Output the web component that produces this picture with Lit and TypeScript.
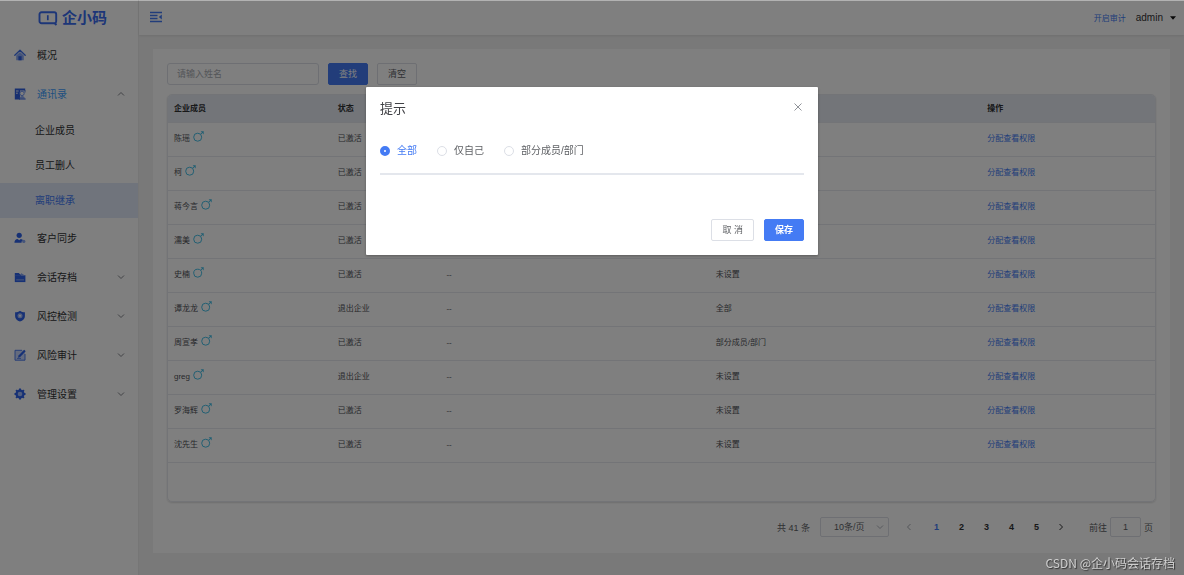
import { LitElement, html, css, svg, nothing } from "lit";
import { customElement, state } from "lit/decorators.js";
import { classMap } from "lit/directives/class-map.js";

const menuIcons: Record<string, unknown> = {
  home: svg`<path d="M.8 6.3 6 1.2l5.2 5.1" fill="none" stroke="#3d6fec" stroke-width="1.3" stroke-linecap="round" stroke-linejoin="round"/><path d="M2.2 6.6 6 3l3.8 3.6v4.7H2.2z" fill="#8aa9f5"/><path d="M4.4 7.2h3.2v4.1H4.4z" fill="#2f5fe0"/>`,
  contacts: svg`<path d="M.8.6h10.400v2H6v8.900H.8z" fill="#2f5fe0"/><path d="M2 3h2.600M2 5.200h1.800" stroke="#fff" stroke-width=".9"/><circle cx="8" cy="5.400" r="2.200" fill="none" stroke="#6f95f2" stroke-width="1"/><path d="M5.600 10.600c0-3.600 5.200-3.600 5.200 0z" fill="#8aa9f5"/><path d="M5 11h6.600" stroke="#2f5fe0" stroke-width="1"/><path d="M11 2v2.500" stroke="#2f5fe0" stroke-width=".8"/>`,
  customer: svg`<circle cx="5.2" cy="3.3" r="2.6" fill="#2f63ea"/><path d="M.4 10.8c0-2.6 1.4-3.8 3.2-3.9l1.6 1.3 1.6-1.3c1 .1 1.8.6 2.2 1.3L7.6 9.4v1.4z" fill="#2f63ea"/><circle cx="9.8" cy="9.4" r="1.6" fill="#8aa9f5"/>`,
  folder: svg`<path d="M.8 1.9h4l1.5 1.5H9v1.2H.8z" fill="#2f63ea"/><path d="M.8 4.2h10.6v6.9H.8z" fill="#2f63ea"/><path d="m7 1.9 4.4 2.9H7z" fill="#8aa9f5"/><path d="M2.2 8.900h7.800" stroke="#9db7f8" stroke-width=".9"/>`,
  shield: svg`<path d="M6 .8c1.4 1 3 1.5 4.9 1.5v3.9c0 2.6-2 4.3-4.9 5.3C3.100 10.500 1.100 8.800 1.100 6.200V2.300C3 2.300 4.600 1.800 6 .8z" fill="#2f63ea"/><circle cx="6" cy="5.700" r="2.500" fill="#a4bcfa"/><circle cx="6" cy="5.700" r="1" fill="#fff"/>`,
  audit: svg`<path d="M1 1.300h10v9.900H1z" fill="#a4bcfa" opacity=".6"/><path d="M8 1.300H1v9.900h10V5" fill="none" stroke="#3d6fec" stroke-width=".9"/><path d="m4 8.800.5-2.300L10.200.8l1.500 1.500L6.200 8z" fill="#2f63ea"/><path d="M3 9.400h4" stroke="#2f63ea" stroke-width=".7"/>`,
  gear: svg`<circle cx="6" cy="6" r="3.300" fill="none" stroke="#2f63ea" stroke-width="2.600"/><path d="M6 .5v11M.5 6h11M2.100 2.100l7.800 7.800M9.900 2.100 2.100 9.900" stroke="#2f63ea" stroke-width="2"/><circle cx="6" cy="6" r="2.300" fill="#a4bcfa"/>`,
};

const menu = [
  { icon: "home", label: "概况" },
  { icon: "contacts", label: "通讯录", open: true, children: ["企业成员", "员工删人", "离职继承"] },
  { icon: "customer", label: "客户同步" },
  { icon: "folder", label: "会话存档", arrow: true },
  { icon: "shield", label: "风控检测", arrow: true },
  { icon: "audit", label: "风险审计", arrow: true },
  { icon: "gear", label: "管理设置", arrow: true },
];

const members = [
  ["陈瑶", "已激活", "未设置"],
  ["柯", "已激活", "未设置"],
  ["蒋今言", "已激活", "未设置"],
  ["濡美", "已激活", "未设置"],
  ["史楠", "已激活", "未设置"],
  ["谭龙龙", "退出企业", "全部"],
  ["周宣孝", "已激活", "部分成员/部门"],
  ["greg", "退出企业", "未设置"],
  ["罗海辉", "已激活", "未设置"],
  ["沈先生", "已激活", "未设置"],
];

const chevron = (d: string, cls = "chevron") =>
  html`<svg class=${cls} viewBox="0 0 8 8" width="8" height="8" aria-hidden="true"><path d=${d} fill="none" stroke="currentColor" stroke-width="1"/></svg>`;

const DOWN = "M1 2.5 4 5.500 7 2.500";
const UP = "M1 5.500 4 2.500 7 5.500";

const baseStyles = css`
  * { box-sizing: border-box; }
  button, input, select { font: inherit; color: inherit; margin: 0; }
  button { cursor: pointer; }
  a { text-decoration: none; color: inherit; }
  svg { display: block; flex: none; }
  .btn {
    height: 22px;
    padding: 0 10px;
    border: 1px solid #dcdfe6;
    border-radius: 2px;
    background: #fff;
    color: #606266;
    font-size: 9px;
    line-height: 18px;
    white-space: nowrap;
  }
  .btn.primary { background: #447bf4; border-color: #447bf4; color: #fff; }
`;

@customElement("side-menu")
class SideMenu extends LitElement {
  static styles = [baseStyles, css`
    :host { display: block; background: #fff; border-right: 1px solid #ececec; }
    .logo { display: flex; align-items: center; gap: 4px; height: 35px; padding-left: 38px; color: #3a6cf0; font-size: 15px; font-weight: 700; line-height: 20px; }
    ul { list-style: none; margin: 0; padding: 0; }
    .item { display: flex; align-items: center; gap: 11px; height: 39px; padding: 0 13px 0 14px; font-size: 10px; color: #303133; }
    .item span { flex: 1; }
    .item.open { color: #409eff; }
    .chevron { color: #82858b; }
    .sub { display: flex; align-items: center; height: 35px; padding: 0 0 2px 35px; font-size: 10px; color: #303133; }
    .sub.active { background: #e0e8f9; color: #447bf4; }
  `];

  render() {
    return html`
      <div class="logo">
        <svg viewBox="0 0 20 16" width="20" height="16" aria-hidden="true">
          <path d="M14.500 13.200H3.500a2 2 0 0 1-2-2V4.300a2 2 0 0 1 2-2h12.700a2 2 0 0 1 2 2v6.900c0 1-.6 1.800-1.500 2M13 13.200h3.500l2 1.800" fill="none" stroke="#3a6cf0" stroke-width="1.900"/>
          <path d="M9.800 5.200v5" stroke="#3a6cf0" stroke-width="1.700"/>
        </svg>
        <span>企小码</span>
      </div>
      <nav><ul>
        ${menu.map((m) => html`<li>
          <a href="#" class=${classMap({ item: true, open: !!m.open })}>
            <svg viewBox="0 0 12 12" width="12" height="12" aria-hidden="true">${menuIcons[m.icon]}</svg>
            <span>${m.label}</span>
            ${m.open ? chevron(UP) : m.arrow ? chevron(DOWN) : nothing}
          </a>
          ${m.children ? html`<ul>${m.children.map((c) => html`<li>
            <a href="#" class=${classMap({ sub: true, active: c === "离职继承" })}>${c}</a></li>`)}</ul>` : nothing}
        </li>`)}
      </ul></nav>`;
  }
}

@customElement("member-table")
class MemberTable extends LitElement {
  static styles = [baseStyles, css`
    :host { display: block; border: 1px solid #e6e8ee; border-radius: 5px; overflow: hidden; box-shadow: 0 1px 2px #dcdcdc; }
    table { width: 100%; table-layout: fixed; border-collapse: separate; border-spacing: 0; font-size: 8px; line-height: 12px; color: #505257; }
    th, td { padding: 0 6px; text-align: left; border-bottom: 1px solid #e6e9ee; white-space: nowrap; }
    th { height: 28px; background: #e6ebf2; color: #303133; font-weight: 700; }
    td { height: 34px; padding-bottom: 2px; }
    .c-name { width: 16.600%; }
    .c-status { width: 11%; }
    .c-dept { width: 27.300%; }
    .c-scope { width: 27.500%; }
    .name { display: flex; gap: 3px; }
    .name svg { margin-top: -2px; }
    .link { color: #447bf4; }
  `];

  render() {
    return html`<table>
      <colgroup><col class="c-name"><col class="c-status"><col class="c-dept"><col class="c-scope"><col></colgroup>
      <thead><tr><th>企业成员</th><th>状态</th><th>部门</th><th>查看权限</th><th>操作</th></tr></thead>
      <tbody>${members.map(([name, status, scope]) => html`<tr>
        <td><div class="name"><span>${name}</span>
          <svg viewBox="0 0 11 11" width="11" height="11" aria-hidden="true"><g fill="none" stroke="#45bfe6"><circle cx="4.700" cy="6.200" r="4"/><path d="M7.600 3.300 10 .9"/></g><path d="M7.600.3h3.100v3.100z" fill="#45bfe6"/></svg>
        </div></td>
        <td>${status}</td><td>--</td><td>${scope}</td>
        <td><a href="#" class="link">分配查看权限</a></td>
      </tr>`)}</tbody>
    </table>`;
  }
}

@customElement("page-bar")
class PageBar extends LitElement {
  static styles = [baseStyles, css`
    :host { display: flex; justify-content: flex-end; align-items: center; height: 20px; padding-right: 3px; font-size: 9px; color: #606266; }
    .size { display: grid; align-items: center; width: 69px; margin: 0 8px 0 10px; }
    .size select { grid-area: 1 / 1; appearance: none; width: 100%; height: 20px; padding: 0 0 0 13px; border: 1px solid #dcdfe6; border-radius: 2px; background: #fff; }
    .size svg { grid-area: 1 / 1; justify-self: end; margin-right: 5px; color: #b0b3ba; pointer-events: none; }
    .page { display: grid; place-items: center; width: 25px; height: 20px; padding: 0; border: 0; background: none; color: #303133; font-weight: 700; }
    .page.current { color: #447bf4; }
    .page.off { color: #a8abb2; }
    .pages { display: flex; margin: 0 15px 0 2px; }
    .jump { display: flex; align-items: center; gap: 3px; }
    .jump input { width: 31px; height: 20px; padding: 0; text-align: center; border: 1px solid #dcdfe6; border-radius: 2px; background: #fff; }
  `];

  render() {
    return html`
      <span>共 41 条</span>
      <span class="size"><select aria-label="每页条数"><option>10条/页</option></select>${chevron(DOWN)}</span>
      <button class="page off" aria-label="上一页">${chevron("M5.500 1 2.500 4l3 3")}</button>
      <div class="pages">${[1, 2, 3, 4, 5].map((n) => html`<button class=${classMap({ page: true, current: n === 1 })}>${n}</button>`)}
        <button class="page" aria-label="下一页">${chevron("M2.500 1l3 3-3 3")}</button></div>
      <label class="jump">前往<input type="text" .value=${"1"}>页</label>`;
  }
}

@customElement("scope-dialog")
class ScopeDialog extends LitElement {
  @state() private scope = "全部";

  static styles = [baseStyles, css`
    :host { position: fixed; inset: 0; display: flex; justify-content: center; align-items: flex-start; padding: 86px 16px 0; border-top: 1px solid rgba(0, 0, 0, 0.3); background: rgba(0, 0, 0, 0.5) padding-box; }
    .dialog { width: 452px; padding: 14px; border-radius: 1px; background: #fff; box-shadow: 0 1px 3px rgba(0, 0, 0, 0.3); }
    header { display: flex; justify-content: space-between; align-items: flex-start; }
    h2 { margin: 0; font-size: 13px; line-height: 16px; font-weight: 400; color: #404145; }
    .close { display: grid; place-items: center; width: 12px; height: 12px; padding: 0; border: 0; background: none; color: #909399; }
    .scopes { display: flex; gap: 20px; margin: 24px 0 0; padding: 0 0 12px; border-bottom: 2px solid #e4e7ed; }
    .scopes label { display: flex; align-items: center; gap: 7px; font-size: 10px; line-height: 20px; color: #606266; }
    .scopes label.on { color: #447bf4; }
    .scopes input { appearance: none; width: 10px; height: 10px; border: 1px solid #dcdfe6; border-radius: 50%; background: #fff; }
    .scopes input:checked { border: 4px solid #447bf4; }
    footer { display: flex; justify-content: flex-end; gap: 10px; margin-top: 44px; }
    .primary { font-weight: 700; }
  `];

  render() {
    return html`<div class="dialog" role="dialog" aria-label="提示">
      <header><h2>提示</h2>
        <button class="close" aria-label="关闭"><svg viewBox="0 0 8 8" width="8" height="8"><path d="m.5.5 7 7m0-7-7 7" stroke="currentColor" stroke-width="1"/></svg></button>
      </header>
      <div class="scopes" role="radiogroup">
        ${["全部", "仅自己", "部分成员/部门"].map((s) => html`<label class=${classMap({ on: s === this.scope })}>
          <input type="radio" name="scope" .checked=${s === this.scope} @change=${() => (this.scope = s)}>${s}</label>`)}
      </div>
      <footer><button class="btn">取 消</button><button class="btn primary">保存</button></footer>
    </div>`;
  }
}

@customElement("app-root")
class AppRoot extends LitElement {
  static styles = [baseStyles, css`
    :host { display: grid; grid-template-columns: 139px 1fr; min-height: 100vh; background: #f2f2f2; font-family: "Liberation Sans", "Noto Sans CJK SC", sans-serif; }
    .body { display: flex; flex-direction: column; min-width: 0; }
    .top { display: flex; align-items: center; height: 35px; padding: 0 8px 0 11px; background: #fff; box-shadow: 0 1px 2px #dedede; font-size: 10px; color: #303133; }
    .fold { display: block; padding: 0 0 2px; border: 0; background: none; }
    .audit { margin-left: auto; margin-right: 10px; font-size: 8px; color: #447bf4; }
    .user { display: flex; align-items: center; gap: 7px; padding: 0; border: 0; background: none; }
    main { flex: 1; display: flex; flex-direction: column; padding: 14px 14px 22px; }
    .panel { flex: 1; display: flex; flex-direction: column; padding: 14px 14px 16px; background: #fff; }
    .search { display: flex; gap: 9px; margin-bottom: 9px; }
    .search input { width: 152px; height: 22px; padding: 0 9px; border: 1px solid #dcdfe6; border-radius: 3px; background: #fff; font-size: 9px; }
    .search input::placeholder { color: #a8abb2; }
    member-table { flex: 1; margin-bottom: 15px; }
    .mark { position: fixed; right: 9px; bottom: 3px; font-family: "Noto Sans CJK SC", sans-serif; font-size: 12px; line-height: 18px; color: #cfcfcf; text-shadow: 1px 1px 1px #333; }
  `];

  render() {
    return html`
      <side-menu></side-menu>
      <div class="body">
        <header class="top">
          <button class="fold" aria-label="收起菜单"><svg viewBox="0 0 12 12" width="12" height="12"><path d="M0 1.500h12M0 4.500h7.500M0 7.500h7.500M0 10.500h12" stroke="#447bf4" stroke-width="1.400"/><path d="M11.800 3.500v5L8.800 6z" fill="#447bf4"/></svg></button>
          <a href="#" class="audit">开启审计</a>
          <button class="user">admin<svg viewBox="0 0 6 4" width="6" height="4"><path d="M0 .3h6L3 3.700z" fill="#111"/></svg></button>
        </header>
        <main><section class="panel">
          <div class="search">
            <input type="text" placeholder="请输入姓名" aria-label="姓名">
            <button class="btn primary">查找</button>
            <button class="btn">清空</button>
          </div>
          <member-table></member-table>
          <page-bar></page-bar>
        </section></main>
      </div>
      <scope-dialog></scope-dialog>
      <div class="mark">CSDN @企小码会话存档</div>`;
  }
}
